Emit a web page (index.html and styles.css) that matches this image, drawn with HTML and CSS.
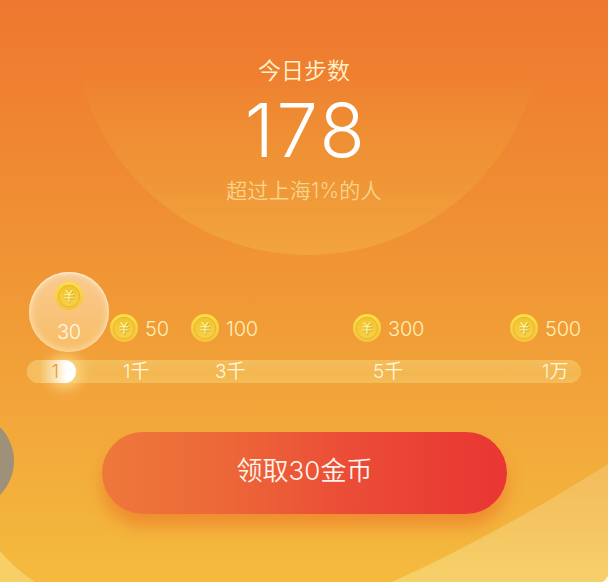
FILE: index.html
```html
<!DOCTYPE html>
<html lang="zh-CN">
<head>
<meta charset="utf-8">
<title>今日步数</title>
<link rel="stylesheet" href="styles.css">
</head>
<body>
<svg class="defs" width="0" height="0" aria-hidden="true">
  <defs>
    <linearGradient id="rim" x1="0" y1="0" x2="0" y2="1">
      <stop offset="0" stop-color="#fae043"/><stop offset="1" stop-color="#f6c23a"/>
    </linearGradient>
    <linearGradient id="face" x1="0" y1="0" x2="0" y2="1">
      <stop offset="0" stop-color="#f3c32e"/><stop offset="1" stop-color="#f7d148"/>
    </linearGradient>
    <symbol id="coin" viewBox="0 0 28 28">
      <circle cx="14" cy="14" r="14" fill="url(#rim)"/>
      <circle cx="14" cy="14" r="10.7" fill="url(#face)" stroke="#e8b02e" stroke-width=".9"/>
      <g fill="none" stroke-linecap="round" stroke-width="1.4">
        <path stroke="#cf9a26" d="M11.5 9.4l3.1 3.7 3.1-3.7M10.6 13.5h8M10.6 16.6h8M14.6 13.2v7"/>
        <path stroke="#f9f193" d="M10.9 8.7l3.1 3.7 3.1-3.7M10 12.8h8M10 15.9h8M14 12.5v7"/>
      </g>
    </symbol>
  </defs>
</svg>
<main class="screen">
  <div class="halo"></div>
  <svg class="waves" viewBox="0 0 608 582" aria-hidden="true">
    <defs>
      <linearGradient id="wave" x1="0" y1="0" x2="0" y2="1">
        <stop offset="0" stop-color="#f3bb5b"/><stop offset="1" stop-color="#f6d069"/>
      </linearGradient>
    </defs>
    <path fill="url(#wave)" d="M608 464Q500 533 392 582H608Z"/>
    <path fill="#f6cf66" d="M0 551Q15 569 35 582H0Z"/>
    <path fill="#fff8ec" d="M608 576Q606 580 602 582H608Z"/>
  </svg>
  <div class="side-handle"></div>

  <header class="summary">
    <h1 class="title">今日步数</h1>
    <div class="steps">178</div>
    <p class="rank">超过上海1%的人</p>
  </header>

  <section class="rewards">
    <div class="bubble"><svg class="coin"><use href="#coin"/></svg><span>30</span></div>
    <div class="reward"><svg class="coin"><use href="#coin"/></svg><span>50</span></div>
    <div class="reward"><svg class="coin"><use href="#coin"/></svg><span>100</span></div>
    <div class="reward"><svg class="coin"><use href="#coin"/></svg><span>300</span></div>
    <div class="reward"><svg class="coin"><use href="#coin"/></svg><span>500</span></div>
  </section>

  <section class="track">
    <span class="progress">1</span>
    <span>1千</span>
    <span>3千</span>
    <span>5千</span>
    <span>1万</span>
  </section>

  <button class="claim" type="button">领取30金币</button>
</main>
</body>
</html>
```
FILE: styles.css
```css
* { box-sizing: border-box; }
body {
  margin: 0;
  font-family: Inter, "Noto Sans CJK SC", sans-serif;
  font-weight: 350;
}
.defs { position: absolute; }
.screen {
  position: relative;
  width: 608px;
  height: 582px;
  overflow: hidden;
  display: flex;
  flex-direction: column;
  background: linear-gradient(#ee782f 0, #ef8231 100px, #f09334 250px, #f2a63a 410px, #f4bb3e 582px);
}
.summary, .rewards, .track, .claim { position: relative; }
.halo {
  position: absolute;
  left: 74px;
  top: -213px;
  width: 468px;
  height: 468px;
  border-radius: 50%;
  background: linear-gradient(rgba(238, 146, 52, 0) 62%, rgba(238, 146, 52, .42) 69%, rgba(240, 156, 57, .65) 85%, rgba(242, 167, 64, .85) 100%);
}
.waves { position: absolute; inset: 0; }
.side-handle {
  position: absolute;
  left: -82px;
  top: 413px;
  width: 96px;
  height: 96px;
  border-radius: 50%;
  background: #9f9079;
}
.summary {
  height: 272px;
  padding-top: 56px;
  display: flex;
  flex-direction: column;
  align-items: center;
}
.title {
  margin: 0;
  font-size: 23px;
  line-height: 30px;
  font-weight: 350;
  color: #fff3cd;
}
.steps {
  height: 88px;
  padding-left: 4px;
  font-size: 74px;
  line-height: 89px;
  letter-spacing: 2.6px;
  color: #fff;
}
.rank {
  margin: 2px 0 0;
  font-size: 21px;
  line-height: 30px;
  letter-spacing: .2px;
  color: #f8d48c;
}
.rewards {
  height: 88px;
  padding-left: 29px;
  display: grid;
  grid-template-columns: 81px 81px 162px 157px auto;
  align-items: start;
  font-size: 20px;
  letter-spacing: -.2px;
  color: #fff0b8;
}
.bubble {
  width: 80px;
  height: 80px;
  padding-top: 10px;
  border-radius: 50%;
  display: flex;
  flex-direction: column;
  align-items: center;
  gap: 10px;
  line-height: 24px;
  color: #fff8e8;
  background: linear-gradient(rgba(255, 228, 190, .66), rgba(252, 212, 135, .58));
  box-shadow: inset 0 0 9px rgba(255, 243, 215, .8), inset 0 1px 2px rgba(255, 250, 235, .8);
}
.reward {
  padding-top: 42px;
  display: flex;
  align-items: center;
  gap: 7px;
}
.reward span { position: relative; top: 1px; }
.coin { display: block; width: 28px; height: 28px; flex: none; }
.track {
  z-index: 0;
  width: 554px;
  height: 23px;
  margin-left: 27px;
  border-radius: 12px;
  display: grid;
  grid-template: 23px / 96px 92px 158px 169px auto;
  font-size: 19px;
  line-height: 24px;
  color: #fff6dc;
  background: linear-gradient(#f4bc5c, #f3b750 60%, #f4bc5a);
}
.progress {
  width: 49px;
  padding-right: 17px;
  border-radius: 12px;
  text-align: right;
  color: #e99a27;
  background: linear-gradient(90deg, #f4bd5d 25%, #fff6e2 72%, #fff 82%);
}
.progress::before {
  content: "";
  position: absolute;
  z-index: -1;
  left: 28px;
  top: 2px;
  width: 20px;
  height: 20px;
  border-radius: 50%;
  box-shadow: 0 0 14px 6px rgba(255, 226, 150, .85);
}
.claim {
  width: 405px;
  height: 82px;
  margin: 49px 0 0 102px;
  padding: 0 0 10px;
  border: 0;
  border-radius: 41px;
  font: inherit;
  font-size: 26px;
  color: #fff3ea;
  background: linear-gradient(90deg, #ee783b, #ec6838 30%, #eb4d37 60%, #e93833 95%);
  box-shadow: 0 12px 16px rgba(237, 120, 42, .65);
}
```
